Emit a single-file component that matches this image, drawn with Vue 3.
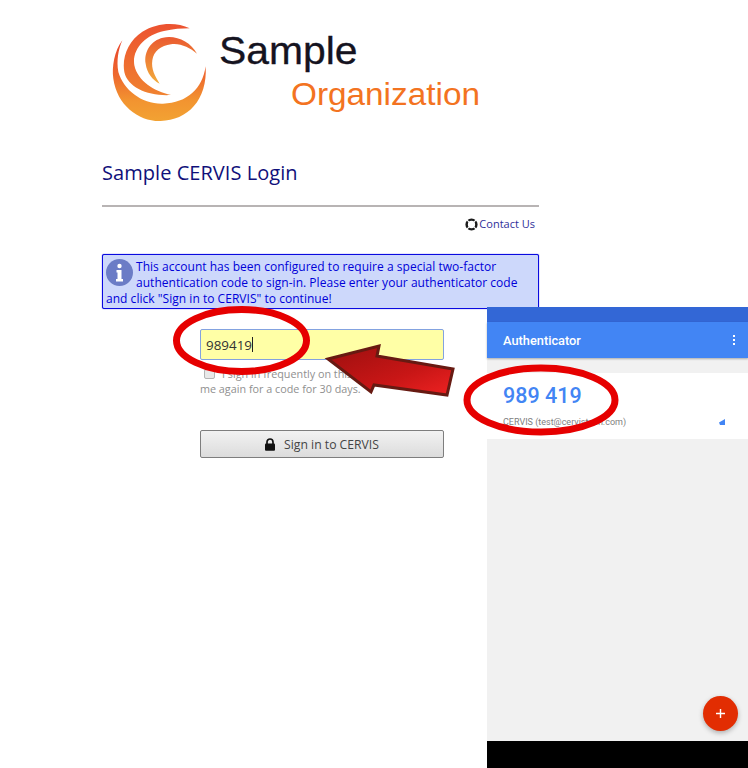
<script setup>
const appName = 'CERVIS'
</script>

<template>
  <div class="screen">
    <main class="page">
      <header class="logo">
        <svg class="swirl" width="100" height="104" viewBox="66 35 300 312" aria-hidden="true">
          <defs>
            <linearGradient id="sw" x1="0" y1="0" x2="0" y2="1">
              <stop offset="0" stop-color="#e8442c" />
              <stop offset="0.45" stop-color="#ee6a2e" />
              <stop offset="0.75" stop-color="#f29430" />
              <stop offset="1" stop-color="#f2a233" />
            </linearGradient>
            <linearGradient id="sw2" x1="0" y1="0" x2="0" y2="1">
              <stop offset="0" stop-color="#ec5230" />
              <stop offset="1" stop-color="#f08230" />
            </linearGradient>
            <linearGradient id="sw3" x1="0" y1="0" x2="0" y2="1">
              <stop offset="0" stop-color="#ea5a30" />
              <stop offset="1" stop-color="#f2ac3c" />
            </linearGradient>
          </defs>
          <path fill="url(#sw)" d="M100 90C76 122 68 170 73 205C84 285 150 334 215 332C295 330 356 270 350 168C340 235 295 278 222 280C160 282 104 240 88 185C82 150 88 118 100 90Z" />
          <path fill="url(#sw2)" d="M302 54C262 34 205 36 160 64C118 92 98 140 106 185C116 232 178 258 246 254C196 244 146 212 136 165C128 118 168 74 225 62C252 56 278 54 302 54Z" />
          <path fill="url(#sw3)" d="M324 130C304 94 262 74 222 82C186 90 164 124 170 160C174 188 190 208 212 220C198 198 186 176 190 150C194 122 216 106 246 102C274 98 302 112 324 130Z" />
        </svg>
        <div class="wordmark">
          <span class="sample">Sample</span>
          <span class="org">Organization</span>
        </div>
      </header>

      <h1 class="title">Sample {{ appName }} Login</h1>
      <hr class="rule" />

      <div class="contact">
        <svg width="13" height="13" viewBox="0 0 24 24" aria-hidden="true">
          <circle cx="12" cy="12" r="9" fill="none" stroke="#1c1c1c" stroke-width="4.6" />
          <path d="M3.5 3.5l4 4M20.5 3.5l-4 4M3.5 20.5l4-4M20.5 20.5l-4-4" stroke="#fff" stroke-width="2" />
        </svg>
        <a class="contact-link">Contact Us</a>
      </div>

      <section class="alert">
        <svg class="info" width="27" height="27" viewBox="0 0 27 27" aria-hidden="true">
          <circle cx="13.5" cy="13.5" r="13.5" fill="#6b7cc6" />
          <circle cx="13.5" cy="7" r="2.2" fill="#fff" />
          <path d="M10.5 11h5v9h1.5v2.4h-7V20h1.5v-6.6h-1z" fill="#fff" />
        </svg>
        This account has been configured to require a special two-factor authentication code to sign-in. Please enter your authenticator code and click "Sign in to {{ appName }}" to continue!
      </section>

      <form class="form" @submit.prevent>
        <div class="code-input"><span>989419</span><i class="caret"></i></div>
        <label class="remember">
          <span class="check"></span>
          <span class="remember-first">I sign in frequently on this computer, don't</span>
          <span class="remember-second">me again for a code for 30 days.</span>
        </label>
        <button class="submit" type="button">
          <svg width="12" height="13" viewBox="0 0 12 13" aria-hidden="true">
            <path d="M3 6V4a3 3 0 0 1 6 0v2" fill="none" stroke="#111" stroke-width="1.7" />
            <rect x="1" y="5.6" width="10" height="7.2" rx="1" fill="#111" />
          </svg>
          <span>Sign in to {{ appName }}</span>
        </button>
      </form>
    </main>

    <aside class="phone">
      <div class="status"></div>
      <div class="toolbar">
        <span>Authenticator</span>
        <span class="kebab"><i></i><i></i><i></i></span>
      </div>
      <div class="phone-body">
        <div class="card">
          <div class="code">989 419</div>
          <div class="account">
            <span>{{ appName }} (test@cervistech.com)</span>
            <svg width="7" height="6" viewBox="0 0 7 6" aria-hidden="true"><path d="M0 3.5L6 0v6H1z" fill="#4285f4" /></svg>
          </div>
        </div>
        <div class="fab">
          <svg width="11" height="11" viewBox="0 0 11 11" aria-hidden="true"><path d="M5.5 1v9M1 5.5h9" stroke="#fff" stroke-width="1.4" /></svg>
        </div>
      </div>
      <div class="navbar"></div>
    </aside>

    <svg class="annotations" width="748" height="768" viewBox="0 0 748 768" aria-hidden="true">
      <defs>
        <linearGradient id="arrow" x1="0" y1="0" x2="1" y2="1">
          <stop offset="0" stop-color="#9c0f0f" />
          <stop offset="0.6" stop-color="#c81616" />
          <stop offset="1" stop-color="#ee2222" />
        </linearGradient>
      </defs>
      <polygon points="328,359 379,346 377,356 453,369 447,395 374,385 371,392" fill="url(#arrow)" stroke="#671a12" stroke-width="3" stroke-linejoin="miter" />
      <ellipse cx="241.5" cy="340.5" rx="65" ry="31" fill="none" stroke="#e60000" stroke-width="7" />
      <ellipse cx="541" cy="400" rx="74" ry="32" fill="none" stroke="#e60000" stroke-width="7" />
    </svg>
  </div>
</template>

<style>
html, body { margin: 0; background: #fff; }
</style>

<style scoped>
.screen {
  position: relative;
  width: 748px;
  height: 768px;
  overflow: hidden;
  background: #fff;
  font-family: "Open Sans", "Noto Sans", sans-serif;
}
.page {
  width: 437px;
  margin-left: 102px;
  padding-top: 22px;
}
.logo {
  display: flex;
  height: 104px;
  margin-left: 9px;
  gap: 8px;
  font-family: "Liberation Sans", Arial, sans-serif;
}
.swirl { flex: none; }
.wordmark {
  display: flex;
  flex-direction: column;
  align-items: flex-start;
}
.sample {
  margin-top: 6px;
  font-size: 38px;
  line-height: 46px;
  color: #15131f;
  transform: scaleX(1.075);
  transform-origin: left center;
  -webkit-text-stroke: 0.3px #15131f;
}
.org {
  margin: 2px 0 0 72px;
  font-size: 31px;
  line-height: 38px;
  color: #f37321;
  transform: scaleX(1.075);
  transform-origin: left center;
}
.title {
  margin: 33px 0 0;
  font-size: 20px;
  line-height: 27px;
  font-weight: 400;
  letter-spacing: 0.05px;
  color: #10107a;
}
.rule {
  margin: 19px 0 0;
  border: 0;
  height: 2px;
  background: #b8b4b4;
}
.contact {
  display: flex;
  justify-content: flex-end;
  align-items: center;
  gap: 1px;
  height: 18px;
  margin-top: 8px;
  padding-right: 4px;
}
.contact-link {
  font-size: 11px;
  line-height: 18px;
  color: #30309a;
}
.alert {
  margin-top: 21px;
  height: 55px;
  box-sizing: border-box;
  padding: 4px 3px;
  border: 1px solid #0a0ae0;
  border-radius: 2px;
  background: #cdd8fb;
  box-shadow: 0 0 1px #0000e0;
  color: #0000d8;
  font-size: 12px;
  line-height: 16px;
  letter-spacing: 0.03px;
}
.info {
  float: left;
  margin-right: 3px;
}
.form {
  display: flex;
  flex-direction: column;
  width: 244px;
  margin: 20px 0 0 98px;
}
.code-input {
  display: flex;
  align-items: center;
  height: 31px;
  box-sizing: border-box;
  padding-left: 5px;
  border: 1px solid #83a2e0;
  border-radius: 2px;
  background: #ffffa6;
  color: #333;
  font-size: 13.4px;
}
.caret {
  width: 1px;
  height: 15px;
  background: #222;
}
.remember {
  display: block;
  margin-top: 6px;
  color: #8f8f8f;
  font-size: 10.8px;
  line-height: 15px;
  white-space: nowrap;
}
.check {
  display: inline-block;
  width: 11px;
  height: 10px;
  margin: 0 7px 0 4px;
  border: 1px solid #b4b4b4;
  border-radius: 2px;
  background: #e8e8e8;
  box-sizing: border-box;
  vertical-align: -1px;
}
.remember-first { display: inline-block; }
.remember-second { display: block; }
.submit {
  display: flex;
  align-items: center;
  justify-content: center;
  gap: 8px;
  height: 28px;
  margin-top: 34px;
  padding: 0 1px 0 0;
  border: 1px solid #7e7e7e;
  border-radius: 2px;
  background: linear-gradient(#f2f2f2, #dcdcdc);
  color: #444;
  font-family: inherit;
  font-size: 12.2px;
}
.phone {
  position: absolute;
  left: 487px;
  top: 307px;
  width: 261px;
  height: 461px;
  display: flex;
  flex-direction: column;
  background: #f1f1f1;
  font-family: Roboto, sans-serif;
}
.status {
  height: 15px;
  background: #3367d6;
}
.toolbar {
  display: flex;
  align-items: center;
  justify-content: space-between;
  height: 36px;
  padding: 0 13px 0 16px;
  background: #4285f4;
  color: #fff;
  font-size: 12.8px;
  font-weight: 500;
  box-shadow: 0 1px 2px rgba(0, 0, 0, 0.3);
}
.kebab {
  display: flex;
  flex-direction: column;
  gap: 2px;
}
.kebab i {
  width: 2px;
  height: 2px;
  background: #fff;
}
.phone-body {
  position: relative;
  flex: 1;
  padding-top: 15px;
}
.card {
  height: 66px;
  box-sizing: border-box;
  padding: 9px 16px 0;
  background: #fff;
}
.code {
  color: #4285f4;
  font-size: 21.5px;
  font-weight: 500;
  line-height: 28px;
}
.account {
  display: flex;
  align-items: center;
  justify-content: space-between;
  margin-top: 5px;
  padding-right: 6px;
  color: #808080;
  font-size: 9px;
  line-height: 14px;
}
.fab {
  position: absolute;
  right: 10px;
  bottom: 10px;
  display: flex;
  align-items: center;
  justify-content: center;
  width: 35px;
  height: 35px;
  border-radius: 50%;
  background: #e22d02;
  box-shadow: 0 2px 5px rgba(0, 0, 0, 0.28);
}
.navbar {
  height: 27px;
  background: #000;
}
.annotations {
  position: absolute;
  left: 0;
  top: 0;
  pointer-events: none;
}
</style>
